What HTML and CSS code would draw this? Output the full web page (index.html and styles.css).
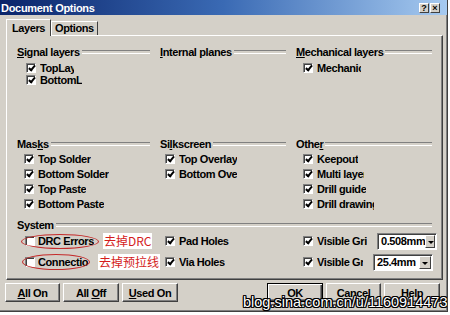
FILE: index.html
```html
<!DOCTYPE html>
<html lang="en">
<head>
    <meta charset="UTF-8">
    <title>Document Options</title>
    <link rel="stylesheet" href="styles.css">
</head>
<body>
    <div class="dialog">
        <div class="titlebar">
            <span class="title">Document Options</span>
            <span class="cap-btns">
                <span class="cap-btn">?</span>
                <span class="cap-btn">×</span>
            </span>
        </div>

        <div class="tabs">
            <div class="tab active">Layers</div>
            <div class="tab">Options</div>
        </div>

        <div class="panel">
            <!-- layer groups -->
            <div class="section sec-layers">
                <div class="group">
                    <div class="group-title"><span><u>S</u>ignal layers</span></div>
                    <div class="check"><span class="box on"></span><span class="lbl cut34">TopLayer</span></div>
                    <div class="check"><span class="box on"></span><span class="lbl cut42">BottomLayer</span></div>
                </div>
                <div class="group">
                    <div class="group-title"><span><u>I</u>nternal planes</span></div>
                </div>
                <div class="group">
                    <div class="group-title"><span><u>M</u>echanical layers</span></div>
                    <div class="check"><span class="box on"></span><span class="lbl cut44">Mechanical 1</span></div>
                </div>
            </div>

            <div class="section sec-masks">
                <div class="group">
                    <div class="group-title"><span>Mas<u>k</u>s</span></div>
                    <div class="check"><span class="box on"></span><span class="lbl">Top Solder</span></div>
                    <div class="check"><span class="box on"></span><span class="lbl">Bottom Solder</span></div>
                    <div class="check"><span class="box on"></span><span class="lbl">Top Paste</span></div>
                    <div class="check"><span class="box on"></span><span class="lbl">Bottom Paste</span></div>
                </div>
                <div class="group mid">
                    <div class="group-title"><span>Si<u>l</u>kscreen</span></div>
                    <div class="check"><span class="box on"></span><span class="lbl">Top Overlay</span></div>
                    <div class="check"><span class="box on"></span><span class="lbl cut58">Bottom Overlay</span></div>
                </div>
                <div class="group">
                    <div class="group-title"><span>Othe<u>r</u></span></div>
                    <div class="check"><span class="box on"></span><span class="lbl">Keepout</span></div>
                    <div class="check"><span class="box on"></span><span class="lbl cut47">Multi layer</span></div>
                    <div class="check"><span class="box on"></span><span class="lbl">Drill guide</span></div>
                    <div class="check"><span class="box on"></span><span class="lbl cut57">Drill drawing</span></div>
                </div>
            </div>

            <!-- system -->
            <div class="section sec-system">
                <div class="group-title wide"><span>System</span></div>

                <div class="sys">
                    <span class="box"></span><span class="lbl">DRC Errors</span>
                    <span class="note">去掉DRC</span>
                    <span class="ring ring-drc"></span>
                </div>
                <div class="sys mid">
                    <span class="box on"></span><span class="lbl">Pad Holes</span>
                </div>
                <div class="sys">
                    <span class="box on"></span><span class="lbl cut50">Visible Grid1</span>
                    <div class="combo"><span class="combo-val">0.508mm</span><span class="combo-btn"></span></div>
                </div>

                <div class="sys">
                    <span class="box"></span><span class="lbl cut50">Connections</span>
                    <span class="note note-2">去掉预拉线</span>
                    <span class="ring ring-conn"></span>
                </div>
                <div class="sys mid">
                    <span class="box on"></span><span class="lbl">Via Holes</span>
                </div>
                <div class="sys">
                    <span class="box on"></span><span class="lbl cut46">Visible Grid2</span>
                    <div class="combo"><span class="combo-val">25.4mm</span><span class="combo-btn"></span></div>
                </div>
            </div>
        </div>

        <div class="buttons">
            <button class="btn w55"><u>A</u>ll On</button>
            <button class="btn w56">All <u>O</u>ff</button>
            <button class="btn w56"><u>U</u>sed On</button>
            <button class="btn w56 default push">OK</button>
            <button class="btn w55">Cancel</button>
            <button class="btn w56">Help</button>
        </div>

        <div class="watermark">blog.sina.com.cn/u/1160914473</div>
    </div>
</body>
</html>
```

FILE: styles.css
```css
* {
    margin: 0;
    padding: 0;
    box-sizing: border-box;
}
body {
    background: #fff;
    font-family: "Liberation Sans", Arial, sans-serif;
    font-size: 11px;
    font-weight: bold;
    letter-spacing: -0.4px;
    color: #000;
}
u {
    text-decoration: underline;
    text-underline-offset: 1px;
}
.dialog {
    position: relative;
    width: 448px;
    height: 312px;
    background: #d4d0c8;
    border-right: 1px solid #404040;
    border-bottom: 1px solid #404040;
    box-shadow: inset -1px -1px #808080;
    display: flex;
    flex-direction: column;
    overflow: hidden;
}
.titlebar {
    height: 15px;
    display: flex;
    align-items: center;
    justify-content: space-between;
    padding: 0 7px 0 1px;
    background: linear-gradient(90deg, #0a246a 0%, #3a6ab4 50%, #a6caf0 100%);
    color: #fff;
}
.title {
    letter-spacing: -0.3px;
}
.cap-btns {
    display: flex;
    gap: 1px;
}
.cap-btn {
    width: 10px;
    height: 10px;
    background: #d4d0c8;
    border: 1px solid;
    border-color: #fff #404040 #404040 #fff;
    color: #000;
    font-size: 9px;
    line-height: 8px;
    text-align: center;
    letter-spacing: 0;
}
.tabs {
    position: relative;
    z-index: 1;
    display: flex;
    align-items: flex-end;
    height: 16px;
    margin-top: 4px;
    padding-left: 6px;
}
.tab {
    height: 14px;
    padding: 0 3px;
    border: 1px solid;
    border-color: #fff #404040 transparent #fff;
    border-bottom: none;
    line-height: 12px;
}
.tab.active {
    height: 17px;
    margin-bottom: -1px;
    padding: 1px 5px 0;
    line-height: 14px;
    background: #d4d0c8;
}
.panel {
    width: 437px;
    height: 245px;
    margin-left: 6px;
    padding: 10px 0 0 10px;
    border: 1px solid;
    border-color: #fff #404040 #404040 #fff;
    box-shadow: inset -1px -1px #808080;
}
.section {
    display: grid;
    grid-template-columns: 143px 136px 1fr;
}
.sec-layers {
    height: 92px;
}
.sec-masks {
    height: 81px;
}
.group-title {
    display: flex;
    align-items: center;
    height: 12px;
    line-height: 12px;
    padding-right: 10px;
    white-space: nowrap;
}
.group-title::after {
    content: "";
    flex: 1;
    height: 2px;
    margin-left: 2px;
    border-top: 1px solid #808080;
    border-bottom: 1px solid #fff;
}
.group-title.wide {
    grid-column: 1 / -1;
    margin-bottom: -2px;
}
.check {
    display: flex;
    align-items: center;
    gap: 4px;
    padding-left: 7px;
}
.mid .check {
    padding-left: 5px;
}
.sec-layers .group-title {
    margin-bottom: 4px;
}
.sec-layers .check {
    height: 12px;
}
.sec-layers .group:first-child .check {
    padding-left: 9px;
}
.sec-masks .group-title {
    margin-bottom: 1px;
}
.sec-masks .check {
    height: 15px;
}
.box {
    position: relative;
    flex: none;
    width: 10px;
    height: 10px;
    background: #fff;
    border: 1px solid;
    border-color: #808080 #fff #fff #808080;
    box-shadow: inset 1px 1px #404040;
}
.box.on::after {
    content: "";
    position: absolute;
    left: 3px;
    top: 0;
    width: 2px;
    height: 5px;
    border-right: 2px solid #000;
    border-bottom: 2px solid #000;
    transform: rotate(40deg);
}
.lbl {
    flex: none;
    white-space: nowrap;
    overflow: hidden;
    line-height: 12px;
}
.cut34 { width: 34px; }
.cut42 { width: 42px; }
.cut44 { width: 44px; }
.cut46 { width: 46px; }
.cut47 { width: 47px; }
.cut50 { width: 50px; }
.cut57 { width: 57px; }
.cut58 { width: 58px; }
.sec-system {
    row-gap: 3px;
}
.sys {
    position: relative;
    display: flex;
    align-items: center;
    gap: 3px;
    height: 18px;
    padding-left: 8px;
}
.sys.mid {
    padding-left: 5px;
    gap: 4px;
}
.sys:nth-child(3n+1) {
    padding-left: 7px;
    gap: 4px;
}
.note {
    flex: none;
    white-space: nowrap;
    margin-left: 6px;
    padding: 0 1px;
    background: #fff;
    color: #d41c1c;
    font-family: "Noto Sans CJK SC", sans-serif;
    font-weight: normal;
    font-size: 12px;
    line-height: 16px;
    letter-spacing: 0;
}
.note-2 {
    margin-left: 7px;
}
.ring {
    position: absolute;
    border: 1px solid #c42a2a;
    border-radius: 50%;
}
.ring-drc {
    left: 4px;
    top: 2px;
    width: 78px;
    height: 15px;
}
.ring-conn {
    left: 5px;
    top: 1px;
    width: 68px;
    height: 16px;
}
.combo {
    display: flex;
    width: 60px;
    height: 17px;
    margin-left: 6px;
    padding: 1px;
    background: #fff;
    border: 1px solid;
    border-color: #808080 #fff #fff #808080;
    box-shadow: inset 1px 1px #404040;
}
.combo-val {
    flex: 1;
    padding-left: 2px;
    line-height: 13px;
}
.combo-btn {
    position: relative;
    width: 12px;
    background: #d4d0c8;
    border: 1px solid;
    border-color: #fff #404040 #404040 #fff;
}
.combo-btn::after {
    content: "";
    position: absolute;
    left: 2px;
    top: 5px;
    border-left: 3px solid transparent;
    border-right: 3px solid transparent;
    border-top: 3px solid #000;
}
.buttons {
    display: flex;
    gap: 3px;
    height: 19px;
    margin-top: 3px;
    padding: 0 7px 0 5px;
}
.btn {
    height: 19px;
    background: #d4d0c8;
    border: 1px solid;
    border-color: #fff #404040 #404040 #fff;
    box-shadow: inset -1px -1px #808080;
    font: inherit;
    letter-spacing: inherit;
    color: #000;
    text-align: center;
}
.w55 { width: 55px; }
.w56 { width: 56px; }
.btn.push {
    margin-left: auto;
}
.btn.default {
    border: 1px solid #000;
    box-shadow: inset 1px 1px #fff, inset -1px -1px #404040, inset -2px -2px #808080;
}
.watermark {
    position: absolute;
    left: 243px;
    top: 294px;
    font-weight: normal;
    font-size: 14.5px;
    letter-spacing: 0;
    color: #fff;
    text-shadow: 1px 0 #000, -1px 0 #000, 0 1px #000, 0 -1px #000,
                 1px 1px #000, -1px -1px #000, 1px -1px #000, -1px 1px #000;
}
```
